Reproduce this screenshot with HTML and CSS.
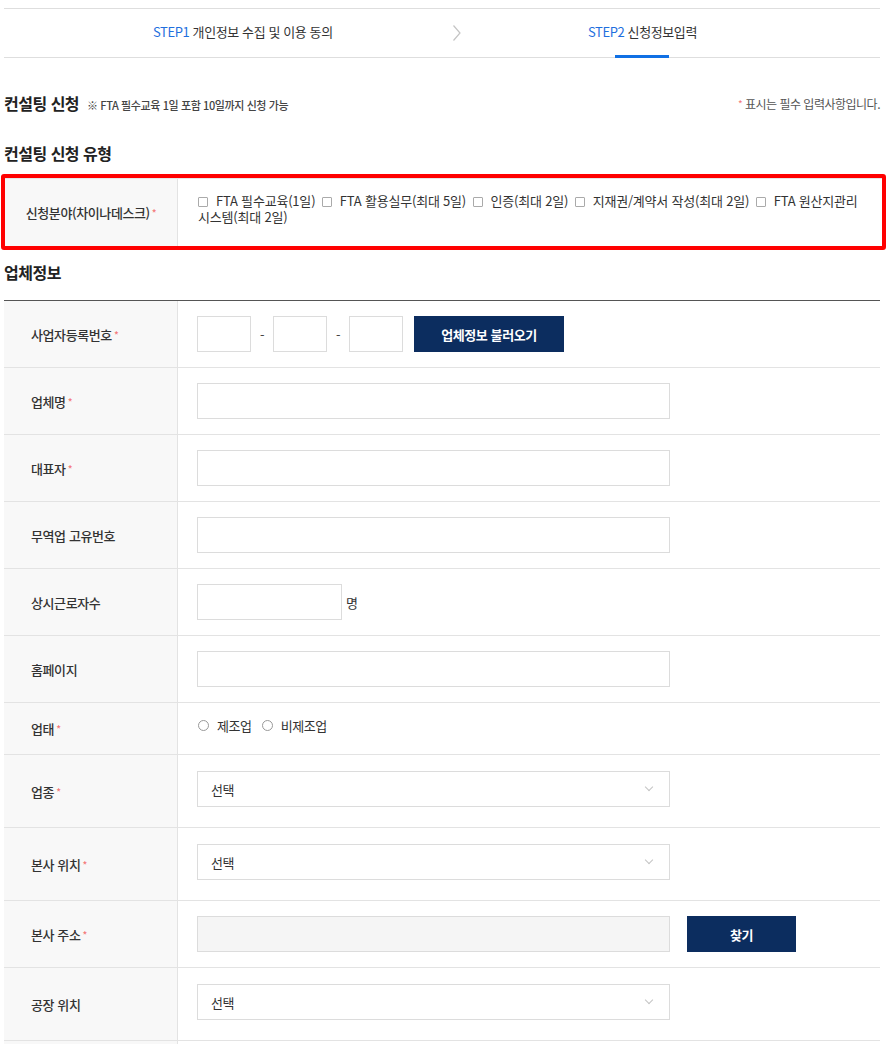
FILE: index.html
```html
<!DOCTYPE html>
<html lang="ko">
<head>
  <meta charset="UTF-8">
  <meta name="viewport" content="width=device-width, initial-scale=1.0">
  <title>컨설팅 신청</title>
  <link rel="stylesheet" href="styles.css">
</head>
<body>
  <div class="page">
    <!-- Step tabs -->
    <nav class="steps">
      <div class="step step-first"><span class="step-label"><span class="step-no">STEP1</span> 개인정보 수집 및 이용 동의</span></div>
      <div class="step-arrow">
        <svg width="10" height="18" viewBox="0 0 10 18"><path d="M1.5 1.5 L8 9 L1.5 16.5" fill="none" stroke="#c4c4c4" stroke-width="1.2"/></svg>
      </div>
      <div class="step step-second"><span class="step-label active"><span class="step-no">STEP2</span> 신청정보입력</span></div>
    </nav>

    <!-- Consulting request -->
    <div class="title-row">
      <h2 class="section-title">컨설팅 신청 <small class="note">※ FTA 필수교육 1일 포함 10일까지 신청 가능</small></h2>
      <p class="required-note"><span class="req">*</span> 표시는 필수 입력사항입니다.</p>
    </div>

    <h3 class="sub-title">컨설팅 신청 유형</h3>
    <div class="highlight-box">
      <div class="form-row">
        <div class="label-cell label-center">신청분야(차이나데스크) <span class="req">*</span></div>
        <div class="field-cell checks">
          <p class="check-list"><span class="check"><span class="box"></span>FTA 필수교육(1일)</span> <span class="check"><span class="box"></span>FTA 활용실무(최대 5일)</span> <span class="check"><span class="box"></span>인증(최대 2일)</span> <span class="check"><span class="box"></span>지재권/계약서 작성(최대 2일)</span> <span class="check"><span class="box"></span>FTA 원산지관리 시스템(최대 2일)</span></p>
        </div>
      </div>
    </div>

    <!-- Company info -->
    <h3 class="sub-title company-title">업체정보</h3>
    <div class="form-table">
      <div class="form-row">
        <div class="label-cell">사업자등록번호<span class="req">*</span></div>
        <div class="field-cell">
          <input class="input input-short" type="text">
          <span class="dash">-</span>
          <input class="input input-short" type="text">
          <span class="dash">-</span>
          <input class="input input-short" type="text">
          <button class="btn btn-load" type="button">업체정보 불러오기</button>
        </div>
      </div>
      <div class="form-row">
        <div class="label-cell">업체명<span class="req">*</span></div>
        <div class="field-cell"><input class="input input-wide" type="text"></div>
      </div>
      <div class="form-row">
        <div class="label-cell">대표자<span class="req">*</span></div>
        <div class="field-cell"><input class="input input-wide" type="text"></div>
      </div>
      <div class="form-row">
        <div class="label-cell">무역업 고유번호</div>
        <div class="field-cell"><input class="input input-wide" type="text"></div>
      </div>
      <div class="form-row">
        <div class="label-cell">상시근로자수</div>
        <div class="field-cell"><input class="input input-mid" type="text"><span class="unit">명</span></div>
      </div>
      <div class="form-row">
        <div class="label-cell">홈페이지</div>
        <div class="field-cell"><input class="input input-wide" type="text"></div>
      </div>
      <div class="form-row row-radio">
        <div class="label-cell">업태<span class="req">*</span></div>
        <div class="field-cell">
          <label class="radio"><span class="circle"></span>제조업</label>
          <label class="radio"><span class="circle"></span>비제조업</label>
        </div>
      </div>
      <div class="form-row row-select">
        <div class="label-cell">업종<span class="req">*</span></div>
        <div class="field-cell"><div class="select">선택<span class="caret"></span></div></div>
      </div>
      <div class="form-row row-select">
        <div class="label-cell">본사 위치<span class="req">*</span></div>
        <div class="field-cell"><div class="select">선택<span class="caret"></span></div></div>
      </div>
      <div class="form-row">
        <div class="label-cell">본사 주소<span class="req">*</span></div>
        <div class="field-cell">
          <input class="input input-wide input-readonly" type="text" readonly>
          <button class="btn btn-find" type="button">찾기</button>
        </div>
      </div>
      <div class="form-row row-select">
        <div class="label-cell">공장 위치</div>
        <div class="field-cell"><div class="select">선택<span class="caret"></span></div></div>
      </div>
      <div class="form-row">
        <div class="label-cell">&nbsp;</div>
        <div class="field-cell"></div>
      </div>
    </div>
  </div>
</body>
</html>
```

FILE: styles.css
```css
body {
  font-family: "Noto Sans CJK KR", "Noto Sans", sans-serif;
  color: #333;
  background: #fff;
  margin: 0;
  padding: 0;
}

.page {
  margin: 8px 9px 0 4px;
}

/* Step tabs */
.steps {
  display: flex;
  height: 48px;
  border-top: 1px solid #dedede;
  border-bottom: 1px solid #dedede;
  font-size: 13px;
  letter-spacing: -0.4px;
  color: #333;
}

.step {
  display: flex;
  align-items: center;
}

.step-first {
  width: 441px;
  padding-left: 149px;
  box-sizing: border-box;
}

.step-arrow {
  width: 24px;
  display: flex;
  align-items: center;
  justify-content: center;
}

.step-second {
  flex: 1;
  padding-left: 119px;
}

.step-no {
  color: #1f6fde;
}

.step-label {
  position: relative;
  height: 48px;
  line-height: 46px;
}

.step-label.active::after {
  content: "";
  position: absolute;
  left: 50%;
  bottom: -1px;
  width: 54px;
  height: 3px;
  margin-left: -27px;
  background: #1070e4;
}

/* Titles */
.title-row {
  display: flex;
  justify-content: space-between;
  align-items: flex-end;
  height: 24px;
  margin-top: 33px;
}

.section-title {
  margin: 0;
  font-size: 16px;
  font-weight: 700;
  color: #222;
  letter-spacing: -0.5px;
  line-height: 24px;
}

.note {
  font-size: 11px;
  font-weight: 500;
  line-height: 1;
  color: #444;
  margin-left: 4px;
  letter-spacing: -0.4px;
}

.required-note {
  margin: 0 0 3px;
  font-size: 12px;
  line-height: 17px;
  color: #555;
  letter-spacing: -0.5px;
}

.req {
  color: #f47a7a;
  font-size: 10px;
  margin-left: 2px;
  vertical-align: 1px;
}

.sub-title {
  margin: 26px 0 9px;
  font-size: 16px;
  font-weight: 700;
  color: #222;
  letter-spacing: -0.5px;
  line-height: 24px;
}

.company-title {
  margin: 10px 0 16px;
}

/* Red highlight box */
.highlight-box {
  border: 4px solid #f00;
  border-radius: 3px;
  margin: 0 -6px 0 -3px;
}

.highlight-box .form-row {
  height: 68px;
  box-sizing: border-box;
  border-top: 1px solid #e6e6e6;
  border-bottom: none;
}

.highlight-box .label-cell {
  width: 173px;
}

/* Form table */
.form-table {
  border-top: 1px solid #555;
}

.form-row {
  display: flex;
  border-bottom: 1px solid #e3e3e3;
  font-size: 13px;
  letter-spacing: -0.4px;
}

.label-cell {
  width: 174px;
  flex-shrink: 0;
  box-sizing: border-box;
  padding-left: 27px;
  background: #f8f8f8;
  border-right: 1px solid #e3e3e3;
  display: flex;
  align-items: center;
  color: #333;
  font-weight: 500;
}

.label-center {
  justify-content: center;
  padding-left: 0;
}

.field-cell {
  flex: 1;
  display: flex;
  align-items: center;
  flex-wrap: wrap;
  padding: 15px 19px;
}

.checks {
  display: block;
  padding: 14px 4px 0 20px;
}

.check-list {
  margin: 0;
  line-height: 16px;
  word-break: keep-all;
  color: #333;
  letter-spacing: -0.2px;
}

.check {
  margin-right: 3px;
}

.box {
  display: inline-block;
  width: 8px;
  height: 8px;
  border: 1.5px solid #aaa;
  border-radius: 1px;
  margin-right: 8px;
  vertical-align: -1px;
}

.input {
  height: 36px;
  border: 1px solid #dcdcdc;
  box-sizing: border-box;
  margin: 0;
  padding: 0 12px;
  font-family: inherit;
  background: #fff;
}

.input-short {
  width: 54px;
}

.input-mid {
  width: 145px;
}

.input-wide {
  width: 473px;
}

.input-readonly {
  background: #f5f5f5;
}

.dash {
  width: 22px;
  text-align: center;
  color: #444;
}

.unit {
  margin-left: 4px;
  color: #333;
}

.btn {
  height: 36px;
  border: none;
  background: #0c2d5f;
  color: #fff;
  font-family: inherit;
  font-size: 13px;
  font-weight: 700;
  letter-spacing: -0.4px;
  cursor: pointer;
}

.btn-load {
  width: 150px;
  margin-left: 11px;
}

.btn-find {
  width: 109px;
  margin-left: 17px;
}

/* Radios */
.row-radio .field-cell {
  padding: 13px 19px 19px 20px;
}

.radio {
  display: inline-flex;
  align-items: center;
  margin-right: 10px;
  color: #333;
}

.circle {
  width: 9px;
  height: 9px;
  border: 1.5px solid #999;
  border-radius: 50%;
  margin-right: 8px;
}

/* Selects */
.row-select .field-cell {
  padding: 16px 19px 20px;
}

.select {
  width: 473px;
  height: 36px;
  box-sizing: border-box;
  border: 1px solid #dcdcdc;
  padding: 0 13px;
  display: flex;
  align-items: center;
  justify-content: space-between;
  color: #333;
}

.caret {
  width: 5px;
  height: 5px;
  border-right: 1px solid #c4c4c4;
  border-bottom: 1px solid #c4c4c4;
  transform: rotate(45deg);
  margin: -4px 4px 0 0;
}
```
